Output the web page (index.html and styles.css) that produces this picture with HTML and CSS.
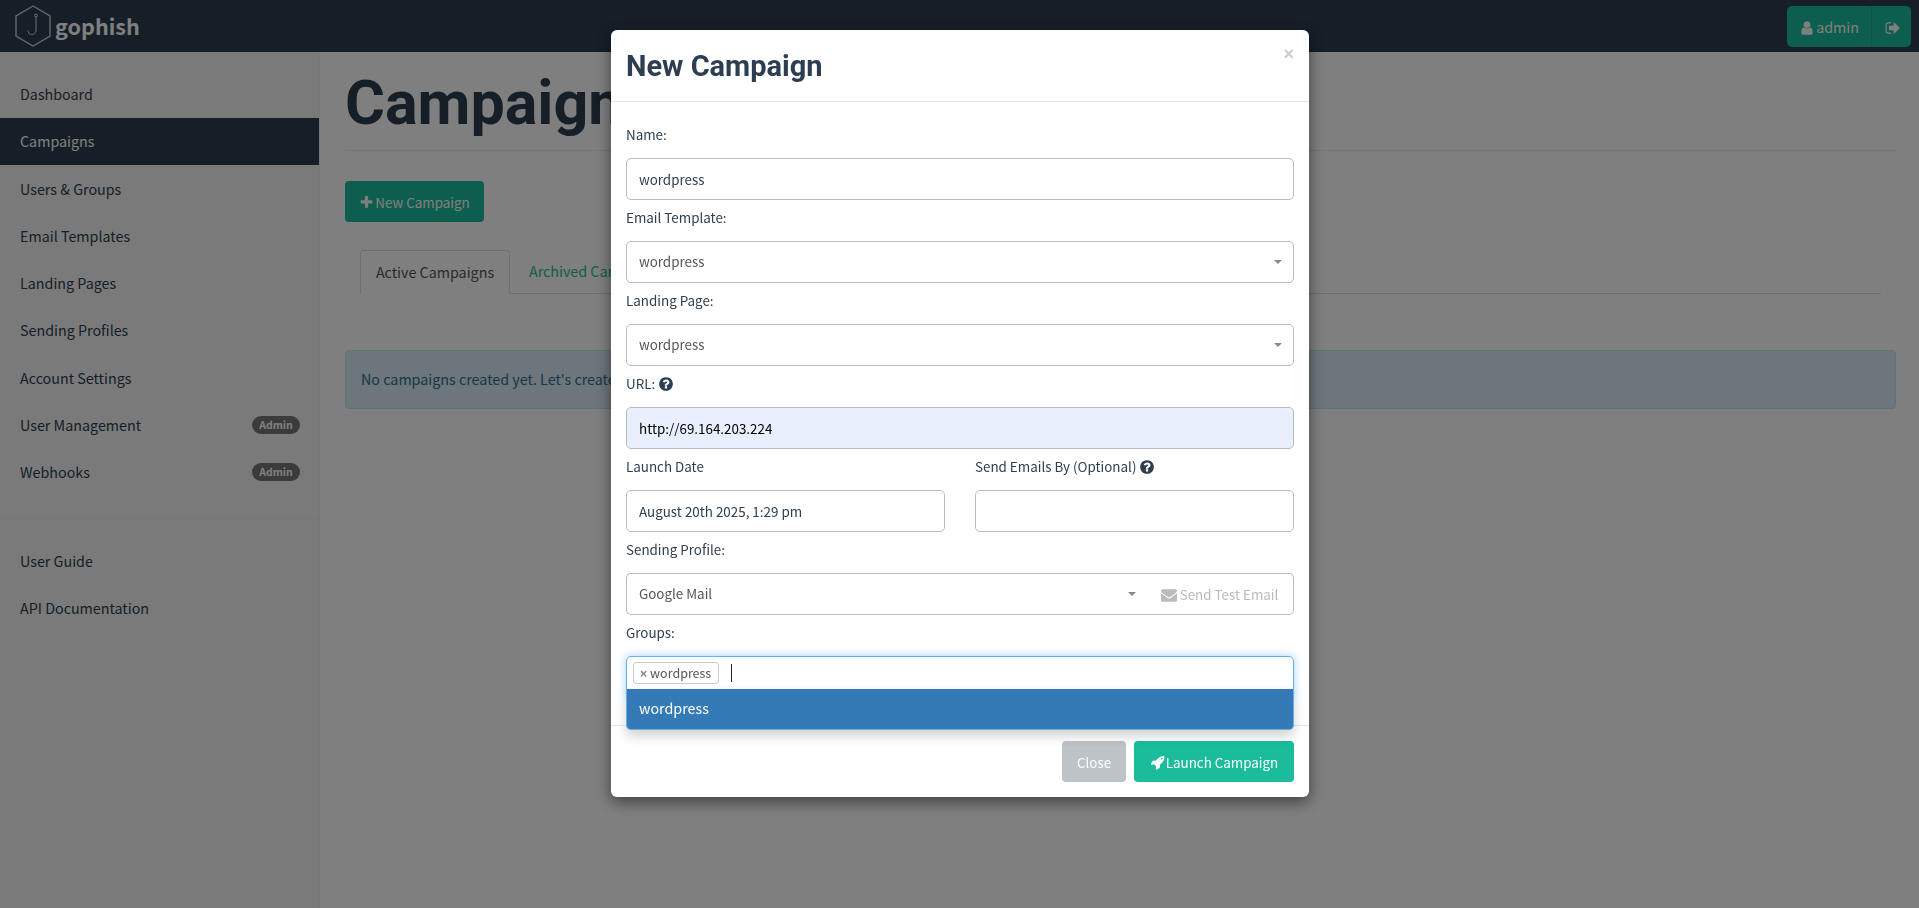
FILE: index.html
```html
<!DOCTYPE html>
<html lang="en">
<head>
  <meta charset="UTF-8" />
  <title>Gophish - Campaigns</title>
  <link rel="stylesheet" href="styles.css">
</head>
<body>
  <svg class="sprite" xmlns="http://www.w3.org/2000/svg">
    <symbol id="i-user" viewBox="0 0 1792 1792"><path d="M1536 1399q0 109-62.5 187t-150.5 78h-854q-88 0-150.5-78t-62.5-187q0-85 8.5-160.5t31.5-152 58.5-131 94-89 134.5-34.5q131 128 313 128t313-128q76 0 134.5 34.5t94 89 58.5 131 31.5 152 8.5 160.5zm-256-887q0 159-112.5 271.5t-271.5 112.5-271.5-112.5-112.5-271.5 112.5-271.5 271.5-112.5 271.5 112.5 112.5 271.5z"/></symbol>
    <symbol id="i-plus" viewBox="0 0 1792 1792"><path d="M1600 736v192q0 40-28 68t-68 28h-416v416q0 40-28 68t-68 28h-192q-40 0-68-28t-28-68v-416h-416q-40 0-68-28t-28-68v-192q0-40 28-68t68-28h416v-416q0-40 28-68t68-28h192q40 0 68 28t28 68v416h416q40 0 68 28t28 68z"/></symbol>
    <symbol id="i-envelope" viewBox="0 0 1792 1792"><path d="M1792 710v794q0 66-47 113t-113 47h-1472q-66 0-113-47t-47-113v-794q44 49 101 87 362 246 497 345 57 42 92.5 65.5t94.5 48 110 24.5h2q51 0 110-24.5t94.5-48 92.5-65.5q170-123 498-345 57-39 100-87zm0-294q0 79-49 151t-122 123q-376 261-468 325-10 7-42.5 30.5t-54 38-52 32.5-57.5 27-50 9h-2q-23 0-50-9t-57.5-27-52-32.5-54-38-42.5-30.5q-91-64-262-182.5t-205-142.5q-62-42-117-115.5t-55-136.5q0-78 41.5-130t118.5-52h1472q65 0 112.5 47t47.5 113z"/></symbol>
    <symbol id="i-signout" viewBox="0 0 1792 1792"><path d="M704 1440q0 4 1 20t.5 26.5-3 23.5-10 19.5-20.5 6.5h-320q-119 0-203.5-84.5t-84.5-203.5v-704q0-119 84.5-203.5t203.5-84.5h320q13 0 22.5 9.5t9.5 22.5q0 4 1 20t.5 26.5-3 23.5-10 19.5-20.5 6.5h-320q-66 0-113 47t-47 113v704q0 66 47 113t113 47h288l11.5 1 11.5 3 8 5.5 7 9 2 13.5zm928-544q0 26-19 45l-544 544q-19 19-45 19t-45-19-19-45v-288h-448q-26 0-45-19t-19-45v-384q0-26 19-45t45-19h448v-288q0-26 19-45t45-19 45 19l544 544q19 19 19 45z"/></symbol>
    <symbol id="i-question" viewBox="0 0 1792 1792"><path d="M1024 1376v-192q0-14-9-23t-23-9h-192q-14 0-23 9t-9 23v192q0 14 9 23t23 9h192q14 0 23-9t9-23zm256-672q0-88-55.5-163t-138.5-116-170-41q-243 0-371 213-15 24 8 42l132 100q7 6 19 6 16 0 25-12 53-68 86-92 34-24 86-24 48 0 85.5 26t37.5 59q0 38-20 61t-68 45q-63 28-115.5 86.5t-52.5 125.5v36q0 14 9 23t23 9h192q14 0 23-9t9-23q0-19 21.5-49.5t54.5-49.5q32-18 49-28.5t46-35 44.5-48 28-60.5 12.5-81zm384 192q0 209-103 385.5t-279.5 279.5-385.5 103-385.5-103-279.5-279.5-103-385.5 103-385.5 279.5-279.5 385.5-103 385.5 103 279.5 279.5 103 385.5z"/></symbol>
    <symbol id="i-rocket" viewBox="0 0 1792 1792"><path d="M1504 448q0-40-28-68t-68-28-68 28-28 68 28 68 68 28 68-28 28-68zm224-288q0 249-75.5 430.5t-253.5 360.5q-81 80-195 176l-20 379q-2 16-16 26l-384 224q-7 4-16 4-12 0-23-9l-64-64q-13-14-8-32l85-276-281-281-276 85q-3 1-9 1-14 0-23-9l-64-64q-17-19-5-39l224-384q10-14 26-16l379-20q96-114 176-195 188-187 358-258t431-71q14 0 23 9t9 23z"/></symbol>
  </svg>

  <header class="navbar">
    <a class="brand" href="#">
      <svg class="brand-mark" viewBox="0 0 40 44" width="40" height="44" fill="none">
        <path class="hex" d="M20 2 L37 12 L37 32 L20 42 L3 32 L3 12 Z"/>
        <circle class="hook" cx="23" cy="11.5" r="1.4"/>
        <path class="hook" d="M23 13 V26 C23 32 15 32 15 26.5"/>
      </svg>
      <span class="brand-name">gophish</span>
    </a>
    <div class="user-btn">
      <span class="user-name"><svg class="icon"><use href="#i-user"/></svg> admin</span>
      <span class="user-out"><svg class="icon"><use href="#i-signout"/></svg></span>
    </div>
  </header>

  <div class="layout">
    <aside class="sidebar">
      <ul class="side-nav">
        <li><a href="#">Dashboard</a></li>
        <li class="active"><a href="#">Campaigns</a></li>
        <li><a href="#">Users &amp; Groups</a></li>
        <li><a href="#">Email Templates</a></li>
        <li><a href="#">Landing Pages</a></li>
        <li><a href="#">Sending Profiles</a></li>
        <li><a href="#">Account Settings</a></li>
        <li><a href="#">User Management <span class="badge">Admin</span></a></li>
        <li><a href="#">Webhooks <span class="badge">Admin</span></a></li>
      </ul>
      <hr class="side-rule">
      <ul class="side-nav">
        <li><a href="#">User Guide</a></li>
        <li><a href="#">API Documentation</a></li>
      </ul>
    </aside>

    <main class="main">
      <h1 class="page-header">Campaigns</h1>
      <button class="btn btn-new"><svg class="icon"><use href="#i-plus"/></svg> New Campaign</button>
      <ul class="tabs">
        <li class="tab active">Active Campaigns</li>
        <li class="tab">Archived Campaigns</li>
      </ul>
      <div class="alert">No campaigns created yet. Let's create one!</div>
    </main>
  </div>

  <div class="backdrop"></div>

  <div class="modal">
    <div class="modal-header">
      <h4 class="modal-title">New Campaign</h4>
      <span class="modal-close">&times;</span>
    </div>
    <div class="modal-body">
      <label class="field-label">Name:</label>
      <input class="control" type="text" value="wordpress">

      <label class="field-label">Email Template:</label>
      <div class="control select"><span>wordpress</span><i class="caret"></i></div>

      <label class="field-label">Landing Page:</label>
      <div class="control select"><span>wordpress</span><i class="caret"></i></div>

      <label class="field-label">URL: <svg class="icon help"><use href="#i-question"/></svg></label>
      <input class="control autofilled" type="text" value="http://69.164.203.224">

      <div class="date-row">
        <div>
          <label class="field-label">Launch Date</label>
          <input class="control" type="text" value="August 20th 2025, 1:29 pm">
        </div>
        <div>
          <label class="field-label">Send Emails By (Optional) <svg class="icon help"><use href="#i-question"/></svg></label>
          <input class="control" type="text">
        </div>
      </div>

      <label class="field-label">Sending Profile:</label>
      <div class="profile-row">
        <div class="control select"><span>Google Mail</span><i class="caret"></i></div>
        <div class="test-btn"><svg class="icon"><use href="#i-envelope"/></svg> Send Test Email</div>
      </div>

      <label class="field-label">Groups:</label>
      <div class="control groups">
        <span class="tag"><b>&times;</b> wordpress</span>
        <i class="text-cursor"></i>
        <div class="group-menu">wordpress</div>
      </div>
    </div>
    <div class="modal-footer">
      <button class="btn btn-close">Close</button>
      <button class="btn btn-launch"><svg class="icon"><use href="#i-rocket"/></svg> Launch Campaign</button>
    </div>
  </div>
</body>
</html>
```

FILE: styles.css
```css
* {
  box-sizing: border-box;
}

html, body {
  height: 100%;
}

body {
  margin: 0;
  overflow: hidden;
  font-family: "Noto Sans CJK JP", "Noto Sans", sans-serif;
  font-size: 14.3px;
  line-height: 20px;
  color: #2c3e50;
  background-color: #fff;
}

a {
  color: inherit;
  text-decoration: none;
}

ul {
  list-style: none;
  margin: 0;
  padding: 0;
}

.sprite {
  display: none;
}

.icon {
  width: 15px;
  height: 15px;
  margin-right: -2px;
  fill: currentColor;
  vertical-align: -2px;
}

/* top bar */
.navbar {
  height: 52px;
  background-color: #2c3e50;
  display: flex;
  justify-content: space-between;
  align-items: center;
  padding: 0 8px 0 13px;
}

.brand {
  display: flex;
  align-items: center;
  gap: 2px;
}

.brand-mark {
  display: block;
}

.hex {
  stroke: #c9d0d5;
  stroke-width: 1.4;
}

.hook {
  stroke: #dfe3e6;
  stroke-width: 1;
}

.brand-name {
  font-size: 21.6px;
  font-weight: 700;
  line-height: 30px;
  color: #fff;
}

.user-btn {
  display: flex;
  height: 41px;
  background-color: #1abc9c;
  color: #fff;
  border-radius: 5px;
  line-height: 41px;
}

.user-btn .icon {
  width: 16px;
  height: 16px;
  vertical-align: -3px;
}

.user-name {
  width: 85px;
  text-align: center;
  border-right: 1px solid #18aa8d;
}

.user-out {
  width: 39px;
  text-align: center;
}

/* sidebar */
.layout {
  display: flex;
  height: 856px;
}

.sidebar {
  width: 320px;
  flex: none;
  padding-top: 18.7px;
  background-color: #f5f5f5;
  border-right: 1px solid #eee;
}

.side-nav li {
  height: 47.33px;
}

.side-nav a {
  display: flex;
  justify-content: space-between;
  align-items: center;
  height: 100%;
  padding: 0 19px 1px 20px;
  color: #2c3e50;
}

.side-nav .active a {
  background-color: #2c3e50;
  color: #fff;
}

.badge {
  width: 48px;
  height: 18px;
  border-radius: 9px;
  background-color: #777;
  color: #fff;
  font-size: 10.5px;
  font-weight: 700;
  line-height: 18px;
  text-align: center;
}

.side-rule {
  margin: 22px 0 18px;
  border: 0;
  border-top: 1px solid #eee;
}

/* main column */
.main {
  flex: 1;
  padding: 18px 23px 0 25px;
}

.page-header {
  margin: 0 0 30px;
  padding-bottom: 14px;
  border-bottom: 1px solid #eee;
  font-family: Roboto, sans-serif;
  font-size: 61px;
  font-weight: 700;
  line-height: 66px;
  color: #2c3e50;
}

.btn {
  height: 41px;
  border: 0;
  border-radius: 4px;
  color: #fff;
  font-family: inherit;
  font-size: 13.4px;
  line-height: 20px;
  padding: 0 15px;
}

.btn-new {
  display: block;
  width: 139px;
  background-color: #1abc9c;
  padding: 0;
}

.tabs {
  display: flex;
  height: 44px;
  margin: 28px 15px 0;
  border-bottom: 1px solid #ddd;
}

.tab {
  height: 44px;
  padding: 0 19px;
  line-height: 41px;
  color: #18bc9c;
}

.tab.active {
  width: 150px;
  color: #555;
  background-color: #fff;
  border: 1px solid #ddd;
  border-bottom-color: #fff;
  border-radius: 4px 4px 0 0;
  text-align: center;
  padding: 0;
}

.alert {
  height: 59px;
  margin-top: 56px;
  padding: 0 15px;
  line-height: 56px;
  color: #31708f;
  background-color: #d9edf7;
  border: 1px solid #bce8f1;
  border-radius: 4px;
}

/* modal */
.backdrop {
  position: fixed;
  inset: 0;
  background-color: rgba(0, 0, 0, 0.5);
}

.modal {
  position: fixed;
  top: 30px;
  left: 611px;
  width: 698px;
  height: 767px;
  background-color: #fff;
  border-radius: 6px;
  box-shadow: 0 5px 15px rgba(0, 0, 0, 0.5);
  font-size: 13.4px;
}

.modal-header {
  position: relative;
  height: 72px;
  padding: 15px;
  border-bottom: 1px solid #e5e5e5;
}

.modal-title {
  margin: 0;
  font-family: Roboto, sans-serif;
  font-size: 29px;
  font-weight: 700;
  line-height: 42px;
  color: #2c3e50;
}

.modal-close {
  position: absolute;
  top: 12px;
  right: 15px;
  font-family: "Liberation Sans", sans-serif;
  font-size: 18px;
  font-weight: 700;
  line-height: 24px;
  color: #ccc;
}

.modal-body {
  height: 623px;
  padding: 15px;
}

.field-label {
  display: block;
  height: 41px;
  line-height: 34px;
}

.help {
  width: 16px;
  height: 16px;
  margin-right: 0;
  vertical-align: -3px;
}

.control {
  display: block;
  width: 100%;
  height: 42px;
  padding: 0 12px;
  border: 1px solid #bbb;
  border-radius: 5px;
  background-color: #fff;
  color: #2c3e50;
  font-family: inherit;
  font-size: 13.4px;
  line-height: 40px;
  outline: none;
}

.autofilled {
  background-color: #e8f0fe;
  color: #000;
}

.select {
  display: flex;
  justify-content: space-between;
  align-items: center;
  padding-bottom: 2px;
  color: #555;
}

.caret {
  width: 0;
  height: 0;
  margin: 2px -1px 0 0;
  border-top: 4px solid #888;
  border-left: 4px solid transparent;
  border-right: 4px solid transparent;
}

.date-row {
  display: grid;
  grid-template-columns: 1fr 1fr;
  gap: 30px;
}

.profile-row {
  display: flex;
}

.profile-row .select {
  flex: 1;
  padding-right: 11px;
  border-right: 0;
  border-radius: 5px 0 0 5px;
}

.test-btn {
  width: 148px;
  height: 42px;
  flex: none;
  border: 1px solid #bbb;
  border-left: 0;
  border-radius: 0 5px 5px 0;
  color: #bbb;
  line-height: 40px;
  text-align: center;
}

.test-btn .icon {
  width: 16px;
  height: 16px;
  margin-right: 0;
  vertical-align: -3px;
}

.groups {
  position: relative;
  display: flex;
  align-items: flex-start;
  padding: 5px 6px;
  border-color: #66afe9;
  box-shadow: 0 0 8px rgba(102, 175, 233, 0.6);
}

.tag {
  flex: none;
  width: 86px;
  height: 22px;
  padding: 0 6px;
  border: 1px solid #ccc;
  border-radius: 3px;
  color: #555;
  font-size: 12.5px;
  line-height: 20px;
  white-space: nowrap;
}

.tag b {
  font-family: "Liberation Sans", sans-serif;
  color: #888;
}

.text-cursor {
  flex: none;
  width: 1px;
  height: 18px;
  margin: 2px 0 0 12px;
  background-color: #222;
}

.group-menu {
  position: absolute;
  top: 32px;
  left: -1px;
  right: -1px;
  height: 41px;
  padding: 0 12px;
  background-color: #337ab7;
  border: 1px solid #66afe9;
  border-top: 0;
  border-radius: 0 0 5px 5px;
  box-shadow: 0 6px 12px rgba(0, 0, 0, 0.18);
  color: #fff;
  font-size: 14.3px;
  line-height: 38px;
}

.modal-footer {
  display: flex;
  justify-content: flex-end;
  gap: 8px;
  padding: 15px;
  border-top: 1px solid #e5e5e5;
}

.btn-close {
  width: 64px;
  background-color: #bdc3c7;
  padding: 0;
}

.btn-launch {
  width: 160px;
  background-color: #1abc9c;
  padding: 0;
}
```
